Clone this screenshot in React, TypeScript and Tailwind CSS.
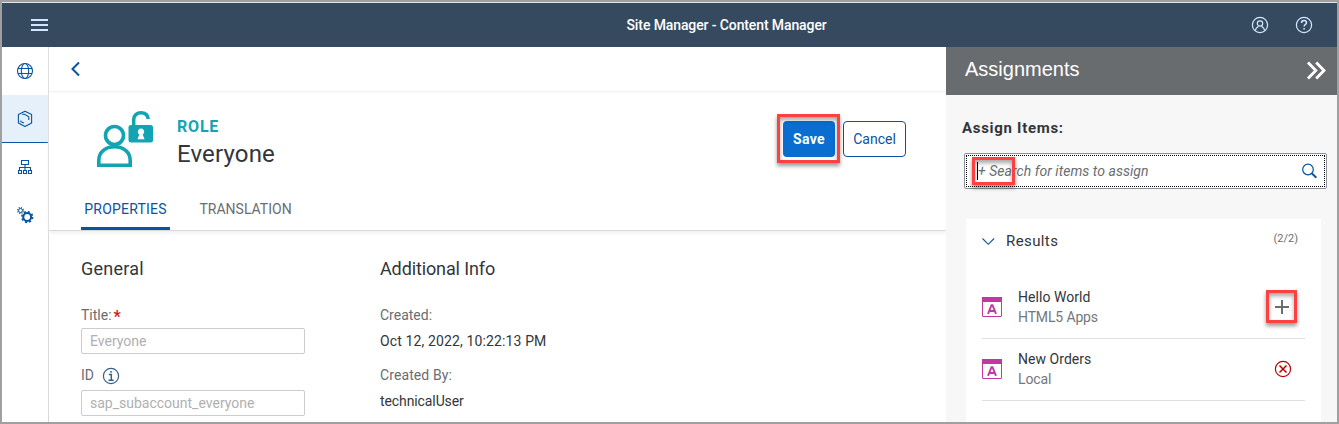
import React from "react";

function GlobeIcon() {
  return (
    <svg width="18" height="18" viewBox="0 0 18 18" fill="none" stroke="#0854a0" strokeWidth="1.1">
      <circle cx="9" cy="9" r="7.5" />
      <ellipse cx="9" cy="9" rx="3.7" ry="7.5" />
      <path d="M2 6.5h14M2 11.5h14" />
    </svg>
  );
}

function ContentIcon() {
  return (
    <svg width="18" height="18" viewBox="0 0 18 18" fill="none" stroke="#0854a0" strokeWidth="1.1">
      <path d="M9 1.3 15.6 4.6V13L9 16.5 2.4 13V4.6Z" strokeLinejoin="round" />
      <path d="M6 4.2h2.6L12.8 6.8V10M4.800 10.500v1.200L8 13.100" />
    </svg>
  );
}

function HierarchyIcon() {
  return (
    <svg width="18" height="18" viewBox="0 0 18 18" fill="none" stroke="#0854a0" strokeWidth="1.1">
      <path d="M5.500 2.500h7v4h-7zM9 6.500v6M3.500 12.500v-3h11v3M2.500 12.500h3v3h-3zM7.500 12.500h3v3h-3zM12.500 12.500h3v3h-3z" />
    </svg>
  );
}

function GearsIcon() {
  return (
    <svg width="18" height="18" viewBox="0 0 18 18" fill="none" stroke="#0854a0">
      <circle cx="4.500" cy="4.500" r="2" strokeWidth="1" />
      <circle cx="4.500" cy="4.500" r="2.900" strokeWidth="1.200" strokeDasharray="1.140 1.140" />
      <circle cx="11.200" cy="11" r="3.900" strokeWidth="2" />
      <circle cx="11.200" cy="11" r="5.300" strokeWidth="1.700" strokeDasharray="2.080 2.080" />
    </svg>
  );
}

function RoleIcon() {
  return (
    <svg width="57" height="57" viewBox="0 0 57 57" fill="none" stroke="#13a4b4" strokeWidth="3.600">
      <circle cx="17.500" cy="24.500" r="9" />
      <path d="M1.800 54.200V49.500C1.800 41.500 8 35.800 17.500 35.800S33.200 41.500 33.200 49.500V54.200Z" />
      <path d="M36.700 15V8.500C36.700 4.500 39.800 1.800 44 1.800c3.800 0 6.800 2.200 7.300 6.200" strokeWidth="3.500" />
      <rect x="31.500" y="14" width="24.500" height="17.500" rx="2.500" fill="#13a4b4" stroke="none" />
      <path d="M44 17.600a3.200 3.200 0 0 1 1.700 5.900l1.800 4.700h-7l1.800-4.700A3.200 3.200 0 0 1 44 17.600Z" fill="#fff" stroke="none" />
    </svg>
  );
}

function AppIcon() {
  return (
    <svg className="shrink-0" width="20" height="20" viewBox="0 0 20 20" fill="none" stroke="#c0399f">
      <rect x="0.500" y="0.500" width="19" height="19" rx="0.500" />
      <path d="M0 0h20v5H0z" fill="#c0399f" stroke="none" />
      <path d="M6 16.800 9.500 8.200h1L14 16.800M7.300 14h5.400" strokeWidth="1.900" />
    </svg>
  );
}

function NavItem({ active, children }: { active?: boolean; children: React.ReactNode }) {
  return (
    <div
      className={
        active
          ? "flex h-12 items-center justify-center border-b border-[#0854a0] bg-[#e5f0fa]"
          : "flex h-12 items-center justify-center"
      }
    >
      {children}
    </div>
  );
}

function ResultRow({ title, source, children }: { title: string; source: string; children: React.ReactNode }) {
  return (
    <div className="flex h-[62px] items-center border-b border-[#e0e0e0] pb-px">
      <AppIcon />
      <div className="ml-4 flex-1 text-sm leading-5">
        <div className="tracking-[0.04px] text-[#32363a]">{title}</div>
        <div className="tracking-[-0.14px] text-[#74777a]">{source}</div>
      </div>
      <div className="relative mr-3 flex size-5 items-center justify-center">{children}</div>
    </div>
  );
}

const highlight = "pointer-events-none absolute border-[3px] border-[#fd4040] shadow-[0_3px_4px_rgba(0,0,0,0.4),inset_0_3px_4px_rgba(0,0,0,0.35)]";

export default function App() {
  return (
    <div className="flex h-[424px] w-[1339px] flex-col overflow-hidden border-2 border-[#a0a0a0] bg-white font-['Roboto',sans-serif] text-sm leading-5 text-[#32363a]">
      <header className="flex h-[45px] shrink-0 items-center border-t border-[#e4e4e4] bg-[#354a5f] text-[#d1e8ff]">
        <svg className="ml-[29px]" width="17" height="14" viewBox="0 0 17 14" stroke="currentColor" strokeWidth="2">
          <path d="M0 2h17M0 7h17M0 12h17" />
        </svg>
        <h1 className="ml-[578.500px] w-[220px] font-medium tracking-[-0.11px] whitespace-nowrap text-white">Site Manager - Content Manager</h1>
        <div className="mr-6 ml-auto flex gap-[26px]">
          <svg width="18" height="18" viewBox="0 0 18 18" fill="none" stroke="currentColor" strokeWidth="1.200">
            <circle cx="9" cy="9" r="7.600" />
            <circle cx="9" cy="7.500" r="2.700" />
            <path d="M4.300 14.700c.3-2.200 1.500-3.500 3.200-4.300M13.700 14.700c-.3-2.200-1.500-3.500-3.200-4.300" />
          </svg>
          <svg width="18" height="18" viewBox="0 0 18 18" fill="none" stroke="currentColor" strokeWidth="1.200">
            <circle cx="9" cy="9" r="7.600" />
            <path d="M6.500 7c0-1.600 1-2.500 2.500-2.500s2.500.9 2.500 2.200c0 1.600-2.400 2-2.400 3.800M9.100 12v1.600" strokeWidth="1.500" />
          </svg>
        </div>
      </header>

      <div className="flex min-h-0 flex-1">
        <nav className="w-[47px] shrink-0 border-r border-[#d9d9d9]">
          <NavItem><GlobeIcon /></NavItem>
          <NavItem active><ContentIcon /></NavItem>
          <NavItem><HierarchyIcon /></NavItem>
          <NavItem><GearsIcon /></NavItem>
        </nav>

        <main className="flex w-[897px] shrink-0 flex-col">
          <div className="flex h-[45px] shrink-0 items-center border-b border-[#f5f5f5] pl-[21px] shadow-[0_1px_1px_#fafafa]">
            <svg width="10" height="16" viewBox="0 0 10 16" fill="none" stroke="#0854a0" strokeWidth="2">
              <path d="M9 1.500 2.500 8 9 14.500" />
            </svg>
          </div>

          <section className="flex h-[139px] shrink-0 flex-col border-b border-[#d9d9d9] shadow-[0_2px_4px_#eeeeee]">
            <div className="flex h-24 pt-[19px] pl-12">
              <RoleIcon />
              <div className="ml-[23px] pt-1.5">
                <div className="text-base leading-5 font-bold tracking-[0.8px] text-[#13a4b4]">ROLE</div>
                <h2 className="mt-px text-2xl leading-8 tracking-[0.15px]">Everyone</h2>
              </div>
              <div className="mr-10 ml-auto flex gap-2 pt-[10px]">
                <div className="relative h-9 w-[52px]">
                  <button className="h-9 w-[52px] rounded bg-[#0a6ed1] font-bold tracking-[0.3px] text-white">Save</button>
                  <div className={`${highlight} -top-[7px] -left-[6px] h-[49px] w-[63px]`} />
                </div>
                <button className="h-9 w-[63px] rounded border border-[#0854a0] text-[#0854a0]">Cancel</button>
              </div>
            </div>
            <div className="flex h-[43px] pl-8">
              <div className="flex w-[89px] justify-center border-b-[3px] border-[#0854a0] pt-3 tracking-[0.2px] text-[#0854a0]">PROPERTIES</div>
              <div className="ml-[29.500px] pt-3 text-[#6a6d70]">TRANSLATION</div>
            </div>
          </section>

          <section className="flex flex-1 pl-8">
            <div className="w-[299px] pt-[26px]">
              <h3 className="text-lg leading-6 tracking-[0.25px]">General</h3>
              <div className="mt-6 flex h-5 text-[#6a6d70]">
                Title:<span className="ml-0.5 text-base font-bold text-[#cc1919]">*</span>
              </div>
              <div className="mt-[3px] h-[26px] w-56 rounded-[2px] border border-[#c9ccd0] pl-2 leading-6 text-[#b0b0b0]">Everyone</div>
              <div className="mt-[11px] flex h-5 items-center text-[#6a6d70]">
                ID
                <svg className="mt-0.5 ml-2" width="18" height="18" viewBox="0 0 18 18" fill="none" stroke="#346187" strokeWidth="1.200">
                  <circle cx="9" cy="9" r="7.600" />
                  <path d="M6.800 7.500h2.500v5.500M6.500 13.200h5.200M9 4v1.800" strokeWidth="1.500" />
                </svg>
              </div>
              <div className="mt-[5px] h-[26px] w-56 rounded-[2px] border border-[#c9ccd0] pl-2 leading-6 text-[#b0b0b0]">sap_subaccount_everyone</div>
            </div>
            <div className="pt-[26px]">
              <h3 className="text-lg leading-6 tracking-[-0.12px]">Additional Info</h3>
              <div className="mt-6 text-[#6a6d70]">Created:</div>
              <div className="mt-1.5 tracking-[0.13px]">Oct 12, 2022, 10:22:13 PM</div>
              <div className="mt-3.5 tracking-[0.1px] text-[#6a6d70]">Created By:</div>
              <div className="mt-1.5 tracking-[-0.1px]">technicalUser</div>
            </div>
          </section>
        </main>

        <aside className="flex flex-1 flex-col bg-[#f7f7f7]">
          <div className="flex h-12 shrink-0 justify-between bg-[#696c6f] pt-[10px] pr-[10px] pl-[19px] text-white">
            <h2 className="font-['Liberation_Sans',sans-serif] text-xl leading-6">Assignments</h2>
            <svg className="mt-1" width="21" height="19" viewBox="0 0 21 19" fill="none" stroke="currentColor" strokeWidth="2.800">
              <path d="m2 1.500 7.800 8L2 17.500M10.200 1.500l7.800 8-7.800 8" />
            </svg>
          </div>
          <h3 className="mt-[21px] ml-4 text-[15px] leading-6 font-bold tracking-[0.7px]">Assign Items:</h3>
          <div className="relative mt-[13px] ml-[18px] flex h-9 w-[363px] shrink-0 rounded-[2px] border border-[#89919a] bg-white p-px">
            <div className="flex flex-1 items-center border border-dotted border-black pr-[7px] pl-[10px]">
              <div className="h-[18px] w-px bg-black" />
              <div className="tracking-[0.04px] text-[#6a6d70] italic">+ Search for items to assign</div>
              <svg className="ml-auto" width="16" height="16" viewBox="0 0 16 16" fill="none" stroke="#0854a0" strokeWidth="1.200">
                <circle cx="7" cy="6.500" r="5.300" />
                <path d="m11 10.500 4.400 4.200" strokeWidth="2" />
              </svg>
            </div>
            <div className={`${highlight} top-[3px] left-[7px] h-7 w-[43px]`} />
          </div>
          <section className="mt-[30px] ml-5 flex w-[355px] flex-1 flex-col bg-white px-4">
            <div className="flex h-[58px] shrink-0 pt-2.5">
              <svg className="mt-2" width="13" height="9" viewBox="0 0 13 9" fill="none" stroke="#0854a0" strokeWidth="1.100">
                <path d="m0.500 1.500 5.800 5.800 5.800-5.800" />
              </svg>
              <div className="ml-[11px] text-[15px] leading-6 tracking-[0.4px]">Results</div>
              <div className="mr-[7px] ml-auto pt-px text-[11px] leading-[18px] text-[#6a6d70]">(2/2)</div>
            </div>
            <ResultRow title="Hello World" source="HTML5 Apps">
              <svg width="20" height="20" viewBox="0 0 20 20" stroke="#6a6d70" strokeWidth="2">
                <path d="M2 10h14M9 3v14" />
              </svg>
              <div className={`${highlight} -top-[7px] -left-[7px] h-[33px] w-[31px]`} />
            </ResultRow>
            <ResultRow title="New Orders" source="Local">
              <svg width="18" height="18" viewBox="0 0 18 18" fill="none" stroke="#bb0000" strokeWidth="1.200">
                <circle cx="9" cy="9" r="7.600" />
                <path d="m5.500 5.500 7 7M12.500 5.500l-7 7" strokeWidth="1.500" />
              </svg>
            </ResultRow>
          </section>
        </aside>
      </div>
    </div>
  );
}
